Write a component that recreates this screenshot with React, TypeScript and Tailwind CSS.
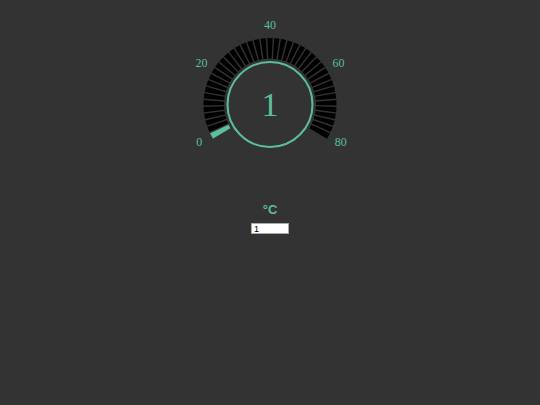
const TEAL = "#5cbf9c";

const CX = 270;
const CY = 104.5;
const R_IN = 46;
const R_OUT = 66.5;
const TICKS = 41; // one tick every 2 units, 0..80
const FIRST = -118;
const STEP = (2 * -FIRST) / (TICKS - 1);

function polar(r: number, deg: number) {
  const a = (deg * Math.PI) / 180;
  return [CX + r * Math.sin(a), CY - r * Math.cos(a)];
}

function wedge(a0: number, a1: number) {
  const [x0, y0] = polar(R_OUT, a0);
  const [x1, y1] = polar(R_OUT, a1);
  const [x2, y2] = polar(R_IN, a1);
  const [x3, y3] = polar(R_IN, a0);
  const large = a1 - a0 > 180 ? 1 : 0;
  return `M${x0} ${y0} A${R_OUT} ${R_OUT} 0 ${large} 1 ${x1} ${y1} L${x2} ${y2} A${R_IN} ${R_IN} 0 ${large} 0 ${x3} ${y3} Z`;
}

function Gauge({ value, min, max }: { value: number; min: number; max: number }) {
  const lit = Math.max(1, Math.round((value - min) / 2) + (value > min ? 0 : 1));
  const labels = [0, 20, 40, 60, 80];
  const start = FIRST - STEP / 2;
  const end = FIRST + (TICKS - 1) * STEP + STEP / 2;

  return (
    <svg width="180" height="140" viewBox="180 10 180 140" className="block">
      {/* scale ring, cut into ticks by straight gaps */}
      <path d={wedge(start, end)} fill="#000" />
      <path d={wedge(start, start + lit * STEP)} fill={TEAL} />
      {Array.from({ length: TICKS - 1 }, (_, i) => {
        const a = start + (i + 1) * STEP;
        const [x0, y0] = polar(R_IN - 1, a);
        const [x1, y1] = polar(R_OUT + 1, a);
        return <line key={i} x1={x0} y1={y0} x2={x1} y2={y1} stroke="#333333" strokeWidth={1.4} />;
      })}
      <circle cx={CX} cy={CY} r={42.5} fill="none" stroke={TEAL} strokeWidth={2} />
      {labels.map((l) => {
        const [x, y] = polar(80, -118 + ((l - min) / (max - min)) * 236);
        return (
          <text
            key={l}
            x={x}
            y={y}
            fill={TEAL}
            fontSize="12"
            fontFamily="'Liberation Serif', serif"
            textAnchor="middle"
            dominantBaseline="central"
          >
            {l}
          </text>
        );
      })}
      <text
        x={CX}
        y={CY + 11}
        fill={TEAL}
        fontSize="34"
        fontFamily="'Liberation Serif', serif"
        textAnchor="middle"
      >
        {value}
      </text>
    </svg>
  );
}

export default function App() {
  return (
    <div className="flex h-[405px] w-full flex-col items-center bg-[#333333] pt-[10px] font-['Liberation_Sans',sans-serif]">
      <Gauge value={1} min={0} max={80} />
      <div className="mt-[52px] text-[13px] font-bold leading-4 text-[#5cbf9c]">°C</div>
      <input
        readOnly
        value="1"
        className="mt-[5px] h-[11px] w-[38px] border border-[#aaa] bg-white pl-[2px] text-[9px] leading-[9px] text-black outline-none"
      />
    </div>
  );
}
